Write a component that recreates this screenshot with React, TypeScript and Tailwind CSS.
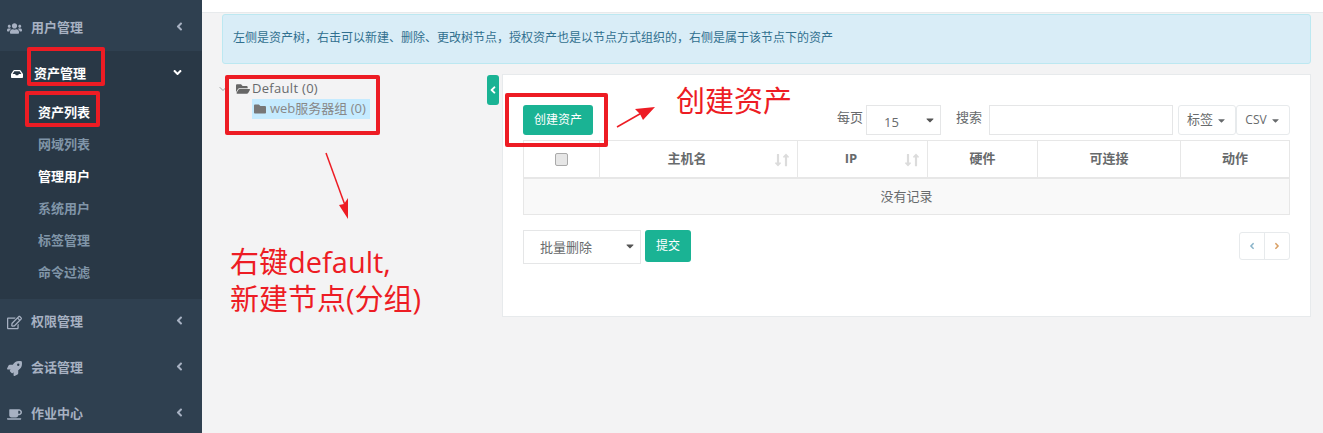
import { FaAngleDown, FaAngleLeft, FaAngleRight, FaCoffee, FaFolder, FaFolderOpen, FaInbox, FaRegEdit, FaRocket, FaUsers, FaCaretDown, FaLongArrowAltDown, FaLongArrowAltUp } from "react-icons/fa";
import { LuChevronDown } from "react-icons/lu";
import type { ReactNode } from "react";

const subMenu = [
  { label: "资产列表", active: true },
  { label: "网域列表", active: false },
  { label: "管理用户", active: true },
  { label: "系统用户", active: false },
  { label: "标签管理", active: false },
  { label: "命令过滤", active: false },
];

const columns = [
  { label: "", width: "w-[76px]" },
  { label: "主机名", width: "w-[198px]", sort: true },
  { label: "IP", width: "w-[130px]", sort: true },
  { label: "硬件", width: "w-[110px]" },
  { label: "可连接", width: "w-[143px]" },
  { label: "动作", width: "w-[108px]" },
];

const MenuItem = ({ icon, label }: { icon: ReactNode; label: string }) => {
  return (
    <div className="flex h-[46px] shrink-0 items-center pl-[7px] pr-[16px] text-[13px] font-bold text-[#a7b1c2]">
      <span className="flex w-[24px] justify-start text-[15px]">{icon}</span>
      <span>{label}</span>
      <FaAngleLeft className="mb-1 ml-auto text-[13px]" />
    </div>
  );
};

const BoxOutline = ({ className }: { className: string }) => {
  return <div className={`pointer-events-none absolute rounded-[2px] border-4 border-[#ed1c24] ${className}`} />;
};

export default function App() {
  return (
    <div className="relative flex h-[433px] w-[1323px] overflow-hidden bg-[#f3f3f4] font-['Open_Sans','Noto_Sans_CJK_SC',sans-serif] text-[#676a6c]">
      <aside className="flex w-[202px] shrink-0 flex-col bg-[#2f4050] pt-[5px]">
        <MenuItem icon={<FaUsers />} label="用户管理" />
        <div className="h-[248px] shrink-0 bg-[#293846]">
          <div className="flex h-[46px] items-center pl-[11px] pr-[18px] text-[13px] font-bold text-white">
            <span className="flex w-[23px] justify-start text-[12px]"><FaInbox /></span>
            <span>资产管理</span>
            <FaAngleDown className="mb-1 ml-auto text-[13px]" />
          </div>
          <ul className="pl-[38px]">
            {subMenu.map((item) => (
              <li key={item.label} className={`flex h-[32px] items-center text-[13px] font-bold ${item.active ? "text-white" : "text-[#8095a8]"}`}>
                {item.label}
              </li>
            ))}
          </ul>
        </div>
        <MenuItem icon={<FaRegEdit />} label="权限管理" />
        <MenuItem icon={<FaRocket />} label="会话管理" />
        <MenuItem icon={<FaCoffee />} label="作业中心" />
      </aside>

      <main className="min-w-0 flex-1">
        <div className="h-[13px] border-b border-[#e7eaec] bg-white" />
        <div className="ml-[20px] mt-[1px] flex h-[50px] w-[1089px] items-center rounded-[3px] border border-[#bce8f1] bg-[#d9edf7] pb-[2px] pl-[10px] text-[12px] text-[#31708f]">
          左侧是资产树，右击可以新建、删除、更改树节点，授权资产也是以节点方式组织的，右侧是属于该节点下的资产
        </div>

        <div className="mt-[10px] flex">
          <div className="w-[285px] shrink-0 pl-[15px] pt-[5px] text-[13px]">
            <div className="flex h-[19px] items-center">
              <LuChevronDown className="mr-[7px] text-[12px] text-[#999]" />
              <FaFolderOpen className="mr-[2px] text-[14px] text-[#666]" />
              <span className="tracking-[0.3px]">Default (0)</span>
            </div>
            <div className="ml-[35px] mt-[1px] flex h-[20px] w-[118px] items-center bg-[#c5ebff] pl-[2px] text-[#888]">
              <FaFolder className="mr-[4px] text-[12px] text-[#777]" />
              <span>web服务器组 (0)</span>
            </div>
          </div>

          <div className="mt-[1px] flex h-[30px] w-[12px] shrink-0 items-center justify-center rounded-[3px] bg-[#1ab394] text-white">
            <FaAngleLeft className="text-[12px]" />
          </div>

          <section className="ml-[3px] h-[243px] w-[809px] border border-[#e7eaec] bg-white px-[20px] pt-[30px] text-[13px]">
            <div className="flex h-[30px] items-start">
              <button className="h-[30px] w-[70px] rounded-[3px] bg-[#1ab394] text-[12px] text-white">创建资产</button>
              <span className="ml-[244px] mt-[3px] w-[29px]">每页</span>
              <div className="flex h-[30px] w-[75px] items-center justify-between border border-[#e5e6e7] pl-[17px] pr-[4px]">
                <span className="mt-[5px]">15</span>
                <FaCaretDown className="text-[12px] text-[#555]" />
              </div>
              <span className="ml-[15px] mt-[3px] w-[33px]">搜索</span>
              <div className="h-[30px] w-[184px] border border-[#e5e6e7]" />
              <button className="ml-[5px] flex h-[30px] w-[58px] items-center justify-center gap-[3px] rounded-[3px] border border-[#e7eaec] text-[#676a6c]">
                标签<FaCaretDown className="text-[11px]" />
              </button>
              <button className="flex h-[30px] w-[54px] items-center justify-center gap-[3px] rounded-[3px] border border-[#e7eaec] text-[12px] text-[#676a6c]">
                CSV<FaCaretDown className="text-[11px]" />
              </button>
            </div>

            <div className="mt-[5px] w-[767px] border border-[#e7e7e7]">
              <div className="flex h-[38px] border-b-2 border-[#e7e7e7]">
                {columns.map((col, i) => (
                  <div key={i} className={`relative flex shrink-0 items-center justify-center border-r border-[#e7e7e7] font-bold last:border-r-0 ${col.width} ${col.sort ? "pr-[23px]" : ""}`}>
                    {i === 0 ? <input type="checkbox" className="h-[13px] w-[13px] appearance-none rounded-[2px] border border-[#aaa] bg-[#e6e6e6]" /> : col.label}
                    {col.sort && (
                      <span className="absolute right-[4px] top-[12px] flex text-[14px] text-[#dcdcdc]">
                        <FaLongArrowAltDown className="-mr-[3px]" />
                        <FaLongArrowAltUp className="-ml-[3px]" />
                      </span>
                    )}
                  </div>
                ))}
              </div>
              <div className="flex h-[35px] items-center justify-center bg-[#f9f9f9]">没有记录</div>
            </div>

            <div className="mt-[15px] flex items-start">
              <div className="flex h-[34px] w-[118px] items-center justify-between border border-[#e5e6e7] pl-[16px] pr-[4px]">
                <span className="mt-[2px]">批量删除</span>
                <FaCaretDown className="mb-[2px] text-[12px] text-[#555]" />
              </div>
              <button className="ml-[4px] h-[32px] w-[46px] rounded-[3px] bg-[#1ab394] text-[12px] text-white">提交</button>
              <div className="ml-auto mt-[2px] flex h-[28px] w-[51px] rounded-[3px] border border-[#e7eaec]">
                <div className="flex flex-1 items-center justify-center border-r border-[#e7eaec] text-[#8ab4c9]">
                  <FaAngleLeft className="text-[10px]" />
                </div>
                <div className="flex flex-1 items-center justify-center text-[#d9a066]">
                  <FaAngleRight className="text-[10px]" />
                </div>
              </div>
            </div>
          </section>
        </div>
      </main>

      {/* 截图上的红色标注 */}
      <BoxOutline className="left-[27px] top-[47px] h-[39px] w-[78px]" />
      <BoxOutline className="left-[25px] top-[91px] h-[36px] w-[75px]" />
      <BoxOutline className="left-[225px] top-[75px] h-[60px] w-[155px]" />
      <BoxOutline className="left-[505px] top-[93px] h-[54px] w-[103px]" />
      <svg className="pointer-events-none absolute left-0 top-0" width="1323" height="433">
        <line x1="326" y1="153" x2="346" y2="208" stroke="#ed1c24" strokeWidth="1.5" />
        <polygon points="348,219 339,205 344,204 348,198" fill="#ed1c24" />
        <line x1="617" y1="127" x2="645" y2="111" stroke="#ed1c24" strokeWidth="1.5" />
        <polygon points="655,107 635,109 640,114 643,120" fill="#ed1c24" />
      </svg>
      <div className="absolute left-[676px] top-[81px] text-[29px] leading-[40px] text-[#ed1c24]">创建资产</div>
      <div className="absolute left-[230px] top-[243px] text-[29px] leading-[37px] text-[#ed1c24]">
        右键default,
        <br />
        新建节点(分组)
      </div>
    </div>
  );
}
